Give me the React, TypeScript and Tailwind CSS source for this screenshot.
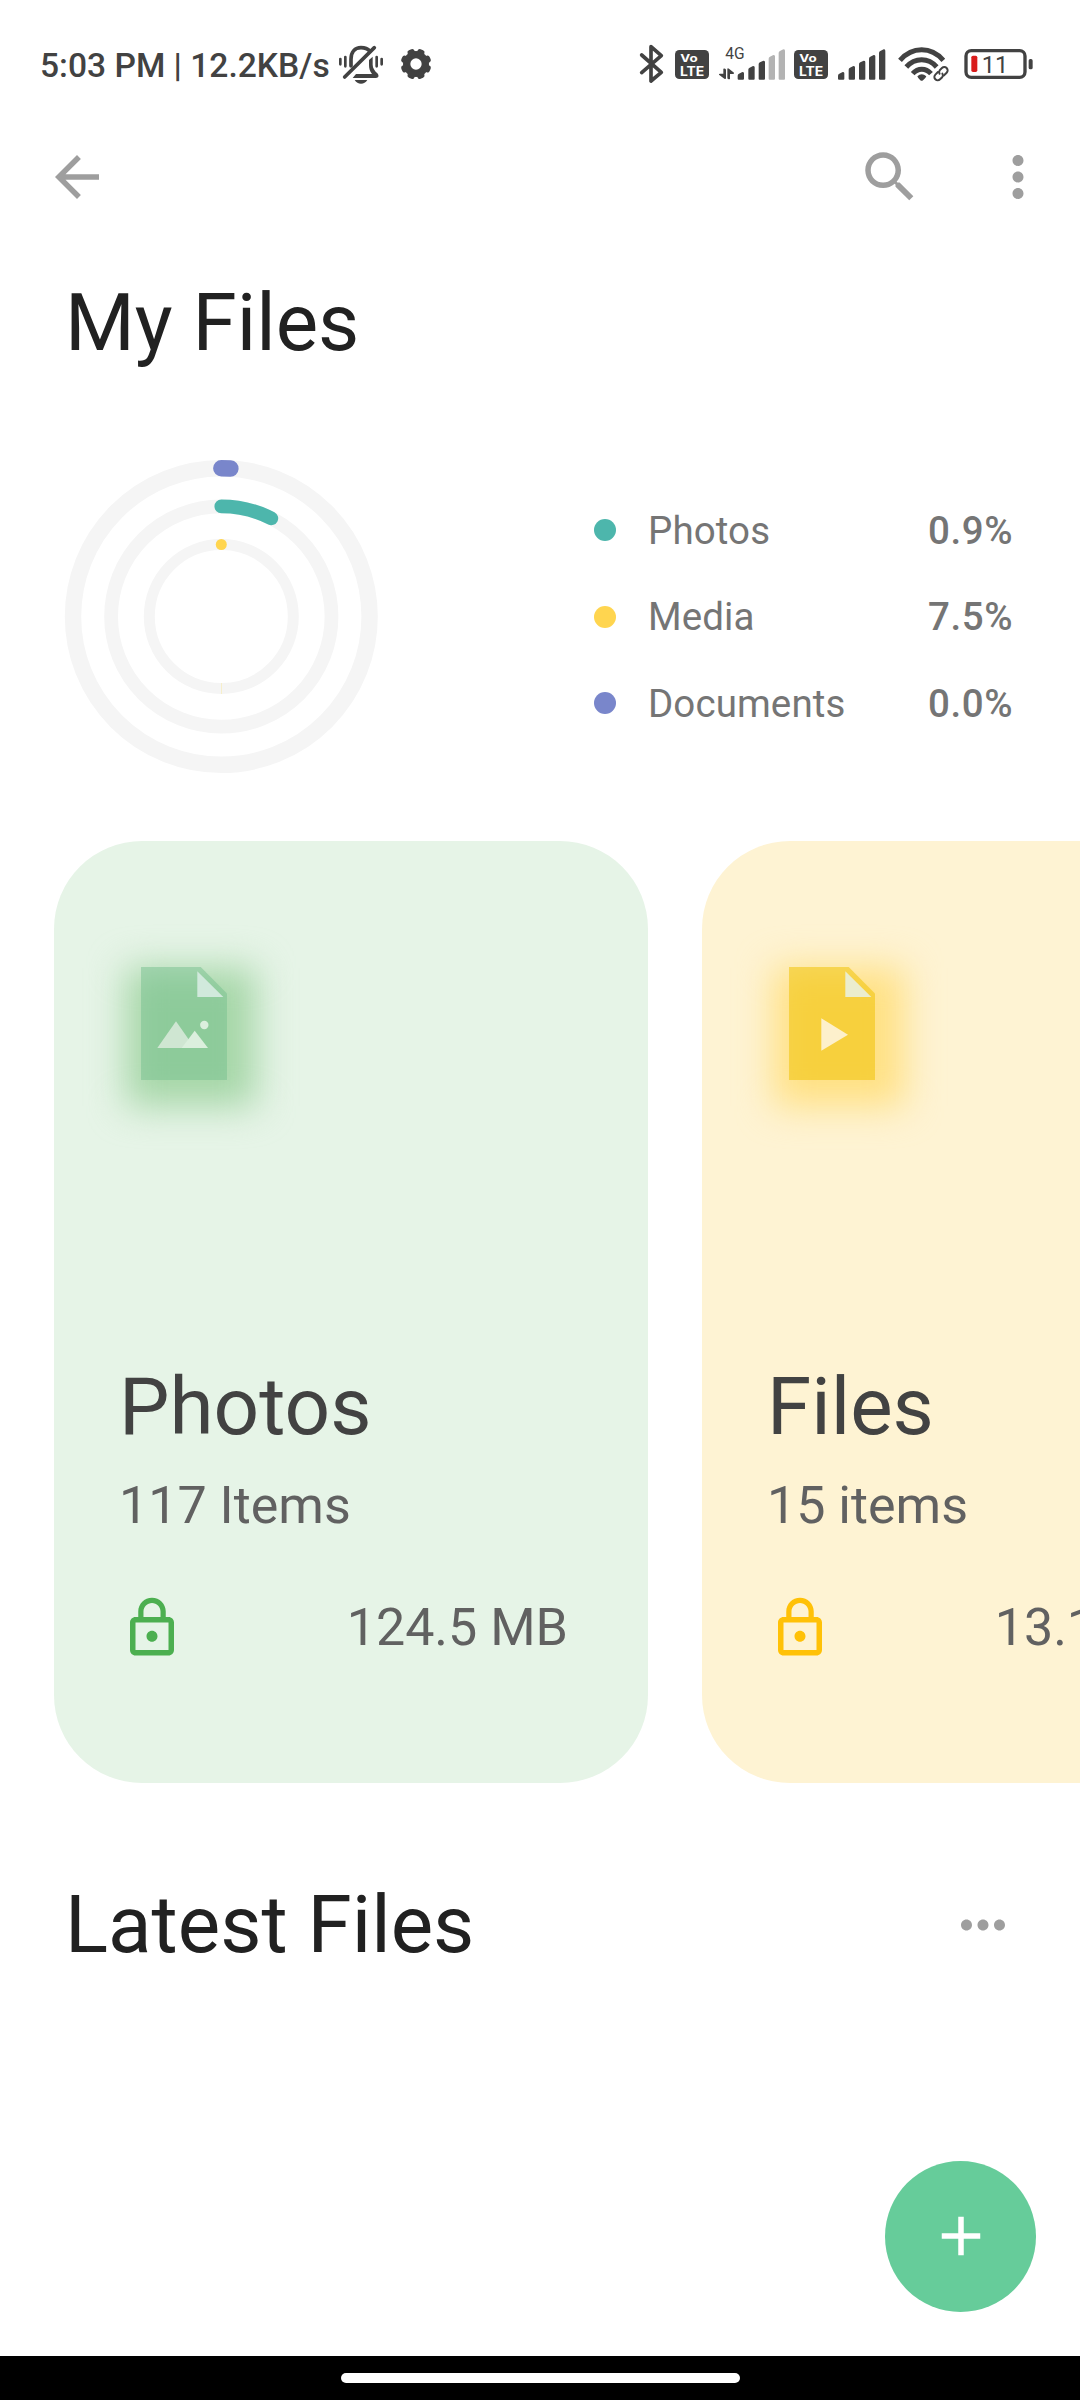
import type { ReactNode } from 'react';

const INK = '#424242';

function StatusGlyph({ x, w, className = '', children }: { x: number; w: number; className?: string; children: ReactNode }) {
  return (
    <svg viewBox={`${x} 42 ${w} 120`} width={w / 3} height={40} className={`shrink-0 ${className}`} fill={INK}>
      {children}
    </svg>
  );
}

function MutedBell() {
  return (
    <StatusGlyph x={954} w={138} className="ml-2">
      <g fill="none" stroke={INK} strokeWidth="8" strokeLinecap="round">
        <path d="M961 87v16M976 81v28M1070 81v28M1085 87v16" />
      </g>
      <path d="M993 108V88C993 66 1005 53 1023 53C1034 53 1043 56 1049 63" fill="none" stroke={INK} strokeWidth="11" strokeLinecap="round" />
      <path d="M1063 53L974 141" stroke={INK} strokeWidth="11" strokeLinecap="round" />
      <path d="M1047 90L1058 80V104C1058 114 1064 122 1072 130C1078 137 1076 144 1068 144H998L1008 132H1056C1049 122 1047 114 1047 104Z" />
      <path d="M1004 150H1042C1037 158 1031 161 1023 161S1009 158 1004 150Z" />
    </StatusGlyph>
  );
}

function Gear() {
  return (
    <StatusGlyph x={1140} w={96} className="ml-4">
      <g transform="translate(1188 102)">
        <circle r="28" fill="none" stroke={INK} strokeWidth="22" />
        {[22.5, 67.5, 112.5, 157.5, 202.5, 247.5, 292.5, 337.5].map((a) => (
          <rect key={a} x="-11" y="-46" width="22" height="22" rx="7" transform={`rotate(${a})`} />
        ))}
      </g>
    </StatusGlyph>
  );
}

function Volte({ className }: { className: string }) {
  return (
    <StatusGlyph x={165} w={102} className={className}>
      <rect x="165" y="60" width="102" height="87" rx="13" />
      <g fill="#fff" fontFamily="Inter, sans-serif" fontWeight="700">
        <text x="181" y="96" fontSize="31" textLength="52" lengthAdjust="spacingAndGlyphs">Vo</text>
        <text x="180" y="137" fontSize="38" textLength="73" lengthAdjust="spacingAndGlyphs">LTE</text>
      </g>
    </StatusGlyph>
  );
}

const BARS = [
  [0, 126],
  [32, 108],
  [63, 92],
  [93, 75],
  [123, 58],
];

function Bars({ x, active }: { x: number; active: number }) {
  return (
    <>
      {BARS.map(([dx, top], i) => (
        <path
          key={dx}
          d={`M${x + dx} ${top + 11}Q${x + dx} ${top + 7} ${x + dx + 4} ${top + 5}L${x + dx + 14} ${top}Q${x + dx + 19} ${top} ${x + dx + 19} ${top + 4}V146Q${x + dx + 19} 149 ${x + dx + 16} 149H${x + dx + 3}Q${x + dx} 149 ${x + dx} 146Z`}
          fill={i < active ? INK : '#b3b3b3'}
        />
      ))}
    </>
  );
}

function StatusBar() {
  return (
    <div className="flex h-[121px] items-start pt-[44px] pr-[46.67px] pl-10 text-[#424242]">
      <span className="mt-[2px] text-[33.6px] leading-10 font-medium whitespace-nowrap">5:03 PM | 12.2KB/s</span>
      <MutedBell />
      <Gear />
      <div className="ml-auto flex">
        <StatusGlyph x={58} w={78}>
          <path d="M66 75L125 127L94 153V50L125 77L66 128" fill="none" stroke={INK} strokeWidth="11" strokeLinecap="round" strokeLinejoin="round" />
        </StatusGlyph>
        <Volte className="ml-[9.67px]" />
        <StatusGlyph x={294} w={202} className="ml-[9px]">
          <text x="316" y="87" fontSize="47" textLength="58" lengthAdjust="spacingAndGlyphs" fontFamily="Roboto, sans-serif">4G</text>
          <path d="M310 116Q318 114 318 120V144Q318 149 313 146L297 134Q296 131 300 131H310Z" />
          <path d="M330 147Q322 149 322 143V118Q322 113 327 116L342 128Q343 132 339 132H330Z" />
          <Bars x={353} active={3} />
        </StatusGlyph>
        <Volte className="ml-[8.67px]" />
        <StatusGlyph x={650} w={147} className="ml-[8.67px]">
          <Bars x={653} active={5} />
        </StatusGlyph>
        <StatusGlyph x={834} w={156} className="ml-[12.33px]">
          <g fill="none" stroke={INK} strokeWidth="15">
            <path d="M840 91C877 49 933 49 970 91" />
            <path d="M859 111C885 82 925 82 950 111" />
            <path d="M878 131C894 113 917 113 933 131" />
          </g>
          <path d="M892 139Q905 127 919 139Q917 145 909 151Q905 154 901 151Q894 145 892 139Z" />
          <g transform="translate(963 131) rotate(-45)" fill="none" stroke={INK} strokeWidth="6" strokeLinecap="round">
            <path d="M-3 -10H-14A10 10 0 0 0 -14 10H-5A9 9 0 0 0 3 3" />
            <path d="M3 10H14A10 10 0 0 0 14 -10H5A9 9 0 0 0 -3 -3" />
          </g>
        </StatusGlyph>
        <StatusGlyph x={1028} w={212} className="ml-[12.67px]">
          <rect x="1037" y="62" width="177" height="80" rx="16" fill="none" stroke={INK} strokeWidth="10" />
          <rect x="1225" y="87" width="12" height="31" rx="5" />
          <rect x="1053" y="77" width="18" height="49" rx="5" fill="#d91c1c" />
          <text x="1084" y="130" fontSize="70" textLength="80" lengthAdjust="spacingAndGlyphs" fontFamily="Roboto, sans-serif">11</text>
        </StatusGlyph>
      </div>
    </div>
  );
}

function MaterialIcon({ d, className = '' }: { d: string; className?: string }) {
  return (
    <svg viewBox="0 0 24 24" className={`size-[66px] shrink-0 ${className}`} fill="currentColor">
      <path d={d} />
    </svg>
  );
}

const ICONS = {
  back: 'M20 11H7.83l5.59-5.59L12 4l-8 8 8 8 1.41-1.41L7.83 13H20v-2z',
  search:
    'M15.5 14h-.79l-.28-.27C15.41 12.59 16 11.11 16 9.5 16 5.91 13.09 3 9.5 3S3 5.91 3 9.5 5.91 16 9.5 16c1.61 0 3.09-.59 4.23-1.57l.27.28v.79l5 4.99L20.49 19l-4.99-5zm-6 0C7.01 14 5 11.99 5 9.5S7.01 5 9.5 5 14 7.01 14 9.5 11.99 14 9.5 14z',
  moreVert:
    'M12 8c1.1 0 2-.9 2-2s-.9-2-2-2-2 .9-2 2 .9 2 2 2zm0 2c-1.1 0-2 .9-2 2s.9 2 2 2 2-.9 2-2-.9-2-2-2zm0 6c-1.1 0-2 .9-2 2s.9 2 2 2 2-.9 2-2-.9-2-2-2z',
  moreHoriz:
    'M6 10c-1.1 0-2 .9-2 2s.9 2 2 2 2-.9 2-2-.9-2-2-2zm12 0c-1.1 0-2 .9-2 2s.9 2 2 2 2-.9 2-2-.9-2-2-2zm-6 0c-1.1 0-2 .9-2 2s.9 2 2 2 2-.9 2-2-.9-2-2-2z',
  lock: 'M12 17c1.1 0 2-.9 2-2s-.9-2-2-2-2 .9-2 2 .9 2 2 2zm6-9h-1V6c0-2.76-2.24-5-5-5S7 3.24 7 6v2H6c-1.1 0-2 .9-2 2v10c0 1.1.9 2 2 2h12c1.1 0 2-.9 2-2V10c0-1.1-.9-2-2-2zM8.9 6c0-1.71 1.39-3.1 3.1-3.1s3.1 1.39 3.1 3.1v2H8.9V6zM18 20H6V10h12v10z',
  add: 'M19 13h-6v6h-2v-6H5v-2h6V5h2v6h6v2z',
};

const RINGS = [
  { r: 148.3, width: 16.4, share: 0.0098, color: '#7986cb' },
  { r: 110.2, width: 13.75, share: 0.075, color: '#4db6ac' },
  { r: 72, width: 11, share: 0, color: '#ffd54f' },
];

function StorageRings() {
  const cx = 157.3;
  const cy = 157.5;
  return (
    <svg viewBox="0 0 315 315" className="size-[315px] shrink-0" fill="none">
      {RINGS.map(({ r, width, share, color }) => {
        const a = share * 2 * Math.PI;
        return (
          <g key={r} strokeWidth={width}>
            <circle cx={cx} cy={cy} r={r} stroke="#f5f5f5" />
            {share > 0 ? (
              <path d={`M${cx} ${cy - r}A${r} ${r} 0 0 1 ${cx + r * Math.sin(a)} ${cy - r * Math.cos(a)}`} stroke={color} strokeLinecap="round" />
            ) : (
              <circle cx={cx} cy={cy - r} r={width / 2} fill={color} stroke="none" />
            )}
          </g>
        );
      })}
      <path d="M157.5 224v11" stroke="#f8eebf" strokeWidth="0.8" />
    </svg>
  );
}

const LEGEND = [
  { label: 'Photos', value: '0.9%', dot: 'bg-[#4db6ac]' },
  { label: 'Media', value: '7.5%', dot: 'bg-[#ffd54f]' },
  { label: 'Documents', value: '0.0%', dot: 'bg-[#7986cb]' },
];

function FileSheet({ fill, fold, opacity, children }: { fill: string; fold: string; opacity: number; children: ReactNode }) {
  return (
    <svg viewBox="0 0 86.3 113.3" width="86.3" height="113.3" className="relative">
      <path d="M0 0H59.7L86.3 26.7V113.3H0Z" fill={fill} fillOpacity={opacity} />
      <path d="M56.3 4.3L82.3 30H56.3Z" fill={fold} />
      {children}
    </svg>
  );
}

interface CardProps {
  title: string;
  items: string;
  size: string;
  card: string;
  glow: string;
  lock: string;
  icon: ReactNode;
}

function CategoryCard({ title, items, size, card, glow, lock, icon }: CardProps) {
  return (
    <section className={`flex h-[942px] w-[594px] shrink-0 flex-col rounded-[88px] pt-[126px] pr-20 pl-[65px] ${card}`}>
      <div className="relative h-[400px] pl-[21.7px]">
        <div className={`absolute top-px left-[7px] h-[138px] w-[130px] blur-[18px] ${glow}`} />
        {icon}
      </div>
      <h2 className="text-[80px] leading-[80px] text-[#424242]">{title}</h2>
      <p className="mt-[33px] text-[52px] leading-[52px] text-[#616161]">{items}</p>
      <div className="mt-[62.5px] flex items-center justify-between text-[52px] leading-[52px] text-[#616161]">
        <MaterialIcon d={ICONS.lock} className={lock} />
        <span className="whitespace-nowrap">{size}</span>
      </div>
    </section>
  );
}

export default function App() {
  return (
    <div className="relative flex h-[2400px] w-[1080px] flex-col overflow-hidden bg-white font-[Roboto,sans-serif]">
      <StatusBar />

      <header className="flex h-[112px] items-center pr-[29px] pl-11 text-[#9e9e9e]">
        <MaterialIcon d={ICONS.back} />
        <MaterialIcon d={ICONS.search} className="ml-auto" />
        <MaterialIcon d={ICONS.moreVert} className="ml-[62.5px]" />
      </header>

      <h1 className="mt-[50px] pl-[65px] text-[80px] leading-[80px] text-[#212121]">My Files</h1>

      <div className="mt-24 flex items-center pl-16">
        <StorageRings />
        <ul className="ml-[215px] text-[38.5px] leading-[38.5px] text-[#757575]">
          {LEGEND.map(({ label, value, dot }) => (
            <li key={label} className="flex h-[86.5px] items-center">
              <span className={`size-[22px] rounded-full ${dot}`} />
              <span className="mt-[2px] ml-[32px] w-[280px] tracking-[0.1px]">{label}</span>
              <span className="mt-[2px] font-medium tracking-[0.6px]">{value}</span>
            </li>
          ))}
        </ul>
      </div>

      <div className="mt-[67px] flex gap-[54px] pl-[54px]">
        <CategoryCard
          title="Photos"
          items="117 Items"
          size="124.5 MB"
          card="bg-[#e6f4e7]"
          glow="bg-[#a5d6a7]"
          lock="text-[#4caf50]"
          icon={
            <FileSheet fill="#75c08d" fold="#d1e9dc" opacity={0.5}>
              <path d="M16.3 81L35 54.3L53.7 81Z" fill="#cfe6d2" />
              <path d="M40.7 81L53.7 63.7L67 81Z" fill="#dbefdd" />
              <circle cx="63.3" cy="58" r="4.2" fill="#dbefdd" />
            </FileSheet>
          }
        />
        <CategoryCard
          title="Files"
          items="15 items"
          size="13.12 MB"
          card="bg-[#fef3d3]"
          glow="bg-[#ffe082]"
          lock="text-[#ffc107]"
          icon={
            <FileSheet fill="#f0c306" fold="#ebedce" opacity={0.55}>
              <path d="M32.3 51.3L59 67.7L32.3 83.7Z" fill="#fdf0cc" />
            </FileSheet>
          }
        />
      </div>

      <div className="mt-[102px] flex items-center justify-between pr-[64px] pl-[65px]">
        <h2 className="text-[80px] leading-[80px] text-[#212121]">Latest Files</h2>
        <MaterialIcon d={ICONS.moreHoriz} className="text-[#9e9e9e]" />
      </div>

      <button className="absolute right-11 bottom-[88px] flex size-[151px] items-center justify-center rounded-full bg-[#66cc9a] pb-px text-white">
        <MaterialIcon d={ICONS.add} />
      </button>

      <div className="mt-auto flex h-11 shrink-0 justify-center bg-black pt-[17px]">
        <div className="h-[10px] w-[399px] rounded-full bg-white" />
      </div>
    </div>
  );
}
